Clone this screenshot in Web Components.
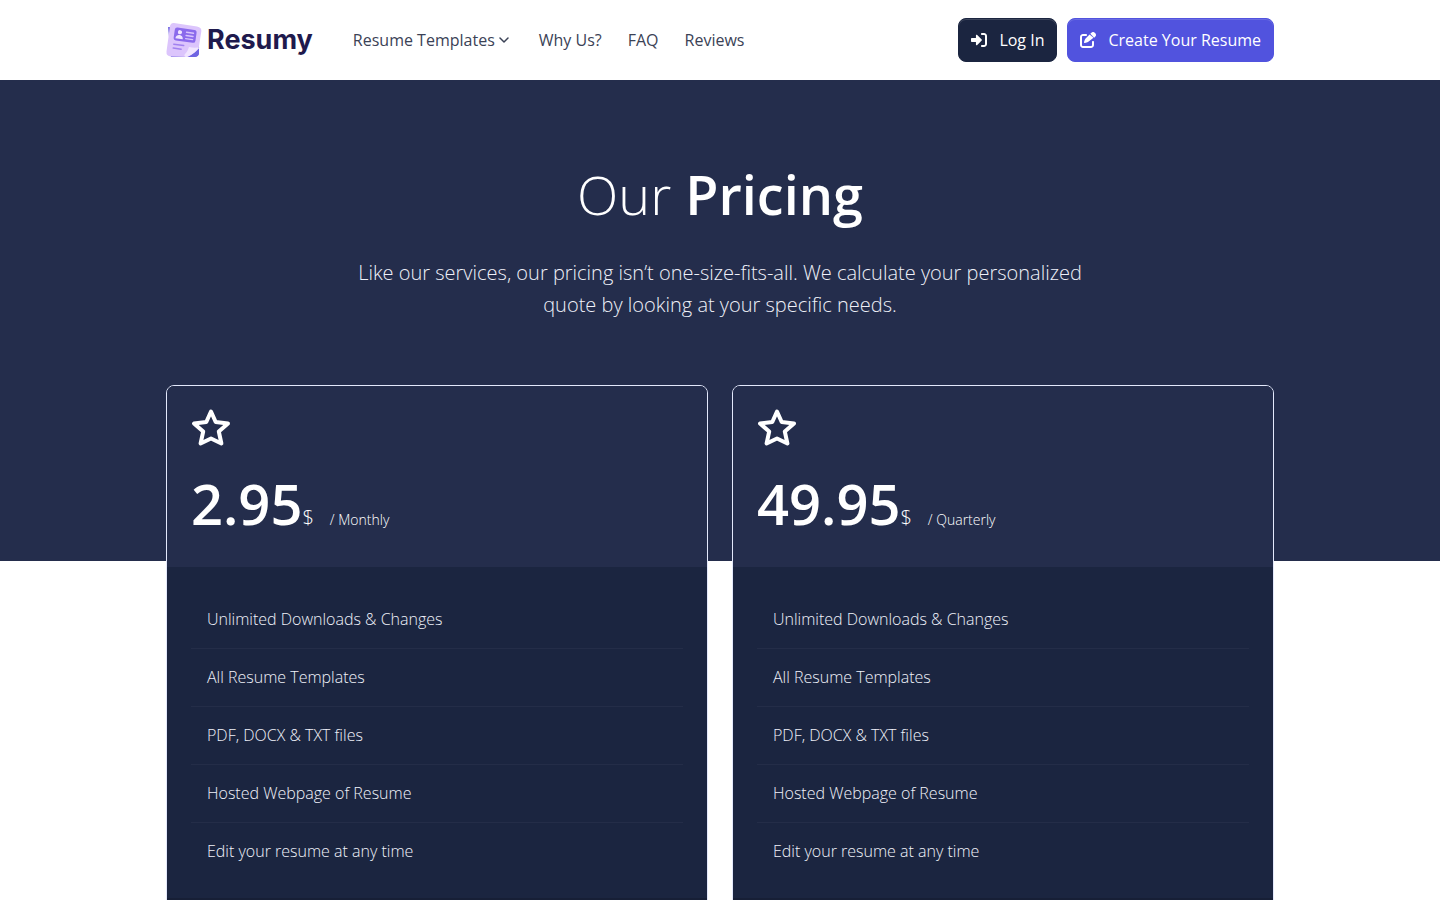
<!DOCTYPE html>
<html lang="en">
<head>
<meta charset="utf-8">
<meta name="viewport" content="width=device-width, initial-scale=1">
<title>Resumy - Pricing</title>
<style>
    body {
        margin: 0;
        background: #fff;
        color: #3b4256;
        font-family: 'Open Sans', 'Noto Sans', sans-serif;
        font-size: 16px;
        line-height: 26px;
        --navy: #242d4c;
        --dark: #1b2540;
        --primary: #5153de;
        --gutter: 16px;
        --container: 1108px;
    }
</style>
</head>
<body>

<site-nav>
    <brand-logo slot="brand"></brand-logo>
    <nav-link href="#templates" dropdown>Resume Templates</nav-link>
    <nav-link href="#why">Why Us?</nav-link>
    <nav-link href="#faq">FAQ</nav-link>
    <nav-link href="#reviews">Reviews</nav-link>
    <nav-button slot="actions" icon="login" href="#login">Log In</nav-button>
    <nav-button slot="actions" icon="edit" href="#create" primary>Create Your Resume</nav-button>
</site-nav>

<main>
    <pricing-hero>
        <span slot="light">Our</span>
        <span slot="bold">Pricing</span>
        <span slot="lead">Like our services, our pricing isn’t one-size-fits-all. We calculate your personalized quote by looking at your specific needs.</span>
    </pricing-hero>

    <pricing-grid>
        <pricing-card price="2.95" period="Monthly">
            <plan-feature>Unlimited Downloads &amp; Changes</plan-feature>
            <plan-feature>All Resume Templates</plan-feature>
            <plan-feature>PDF, DOCX &amp; TXT files</plan-feature>
            <plan-feature>Hosted Webpage of Resume</plan-feature>
            <plan-feature>Edit your resume at any time</plan-feature>
        </pricing-card>
        <pricing-card price="49.95" period="Quarterly">
            <plan-feature>Unlimited Downloads &amp; Changes</plan-feature>
            <plan-feature>All Resume Templates</plan-feature>
            <plan-feature>PDF, DOCX &amp; TXT files</plan-feature>
            <plan-feature>Hosted Webpage of Resume</plan-feature>
            <plan-feature>Edit your resume at any time</plan-feature>
        </pricing-card>
    </pricing-grid>
</main>

<script>
const icons = {
    login: '<svg viewBox="0 0 512 512" width="16" height="16" fill="currentColor" aria-hidden="true"><path d="M352 96h64c18 0 32 14 32 32v256c0 18-14 32-32 32h-64c-18 0-32 14-32 32s14 32 32 32h64c53 0 96-43 96-96V128c0-53-43-96-96-96h-64c-18 0-32 14-32 32s14 32 32 32zM343 273c9-9 9-25 0-34L199 95c-7-7-17-9-26-5s-15 12-15 22v80H32c-18 0-32 14-32 32v64c0 18 14 32 32 32h126v80c0 10 6 18 15 22s19 2 26-5z"/></svg>',
    edit: '<svg viewBox="0 0 512 512" width="16" height="16" fill="currentColor" aria-hidden="true"><path d="M472 22c-29-30-78-30-107 0l-36 35 126 126 35-36c30-29 30-78 0-107zM307 80 172 215c-8 8-14 19-18 30l-26 77c-3 9-1 18 6 25s16 9 25 6l77-26c11-4 22-10 30-18l166-127zM96 64c-53 0-96 43-96 96v256c0 53 43 96 96 96h256c53 0 96-43 96-96v-96c0-18-14-32-32-32s-32 14-32 32v96c0 18-14 32-32 32H96c-18 0-32-14-32-32V160c0-18 14-32 32-32h96c18 0 32-14 32-32s-14-32-32-32z"/></svg>',
    chevron: '<svg viewBox="0 0 10 10" width="10" height="10" fill="none" stroke="currentColor" stroke-width="1.5" stroke-linecap="round" stroke-linejoin="round" aria-hidden="true"><path d="M1 3l4 4 4-4"/></svg>',
    star: '<svg viewBox="0 0 40 40" width="40" height="40" fill="none" stroke="currentColor" stroke-width="4" stroke-linejoin="round" aria-hidden="true"><path d="M20 4.500l4.700 10.500 12.300 1.500-9.200 8 2.600 12L20 31.500l-10.400 5 2.600-12-9.200-8 12.300-1.500z"/></svg>'
}

class BrandLogo extends HTMLElement {
    constructor() {
        super()
        this.attachShadow({ mode: 'open' }).innerHTML = `
            <style>
                :host { display: block; }
                a {
                    display: flex;
                    align-items: center;
                    gap: 5px;
                    color: #1f1a4d;
                    font: 700 27px/40px 'Inter', 'Open Sans', sans-serif;
                    text-decoration: none;
                }
            </style>
            <a href="#home">
                <svg viewBox="0 0 36 36" width="36" height="36" aria-hidden="true">
                    <path d="M2 5h6l25 20v6q0 4-5 4H5z" fill="#7469e2"/>
                    <path d="M8 1l23 3.500q5 1 4.300 5L33 24c-2 5-6 8-11 11L5 34.500q-5-.500-4.500-5L4 4q1-3.500 4-3z" fill="#dcc5fc"/>
                    <path d="M21 35c4-1 9-4 12-10v6q-.500 4-5 4z" fill="#6f64e2"/>
                    <path d="M34 25c-2 3-8 8-13 10-3 0-3-2-2-3 2-2 3-4 4-7 4 1 8 1 11 0z" fill="#f1e6ff"/>
                    <g transform="rotate(8 18 14)" fill="none" stroke-linecap="round">
                        <rect x="8" y="6.500" width="22" height="13" rx="2.500" fill="#8b6aec"/>
                        <path d="M20 10h7M20 13.200h7M20 16.400h7" stroke="#d9c3fd" stroke-width="1.400"/>
                        <circle cx="13.500" cy="10.800" r="2.100" fill="#f0e5ff"/>
                        <path d="M9.800 17.500c0-5 7.400-5 7.400 0z" fill="#f0e5ff"/>
                        <path d="M9 23.500h10M9 27.500h8" stroke="#a181ef" stroke-width="1.500"/>
                    </g>
                </svg>
                <span>Resumy</span>
            </a>`
    }
}

class NavLink extends HTMLElement {
    constructor() {
        super()
        this.attachShadow({ mode: 'open' }).innerHTML = `
            <style>
                :host { display: block; }
                :host([dropdown]) { margin-right: 4px; }
                a {
                    display: flex;
                    align-items: center;
                    gap: 4px;
                    color: inherit;
                    text-decoration: none;
                }
            </style>
            <a href="${this.getAttribute('href')}"><slot></slot>${this.hasAttribute('dropdown') ? icons.chevron : ''}</a>`
    }
}

class NavButton extends HTMLElement {
    constructor() {
        super()
        this.attachShadow({ mode: 'open' }).innerHTML = `
            <style>
                :host { display: block; }
                a {
                    display: flex;
                    align-items: center;
                    gap: 12px;
                    padding: 8px 12px;
                    border: 1px solid var(--dark);
                    border-radius: 8px;
                    background: var(--dark);
                    box-shadow: inset 0 1px 0 rgba(255, 255, 255, .15);
                    color: #fff;
                    font-weight: 500;
                    text-decoration: none;
                }
                :host([primary]) a {
                    border-color: var(--primary);
                    background: var(--primary);
                }
            </style>
            <a href="${this.getAttribute('href')}">${icons[this.getAttribute('icon')]}<slot></slot></a>`
    }
}

class SiteNav extends HTMLElement {
    constructor() {
        super()
        this.attachShadow({ mode: 'open' }).innerHTML = `
            <style>
                :host { display: block; background: #fff; }
                header {
                    display: flex;
                    align-items: center;
                    max-width: var(--container);
                    min-height: 80px;
                    margin: 0 auto;
                    padding: 0 var(--gutter);
                }
                nav {
                    display: flex;
                    flex: 1;
                    gap: 26px;
                    margin-left: 40px;
                }
                .actions { display: flex; gap: 10px; }
            </style>
            <header>
                <slot name="brand"></slot>
                <nav><slot></slot></nav>
                <div class="actions"><slot name="actions"></slot></div>
            </header>`
    }
}

class PricingHero extends HTMLElement {
    constructor() {
        super()
        this.attachShadow({ mode: 'open' }).innerHTML = `
            <style>
                :host {
                    display: block;
                    padding: 80px var(--gutter) 240px;
                    background: var(--navy);
                    color: #fff;
                    text-align: center;
                }
                h1 {
                    margin: 0 0 29px;
                    font-size: 54px;
                    font-weight: 300;
                    line-height: 68px;
                }
                strong { font-weight: 600; }
                p {
                    max-width: 740px;
                    margin: 0 auto;
                    color: #eef0f8;
                    font-size: 20px;
                    font-weight: 300;
                    line-height: 32px;
                }
            </style>
            <h1><slot name="light"></slot> <strong><slot name="bold"></slot></strong></h1>
            <p><slot name="lead"></slot></p>`
    }
}

class PricingGrid extends HTMLElement {
    constructor() {
        super()
        this.attachShadow({ mode: 'open' }).innerHTML = `
            <style>
                :host {
                    display: grid;
                    grid-template-columns: repeat(auto-fit, minmax(300px, 1fr));
                    gap: 24px;
                    max-width: var(--container);
                    margin: -176px auto 0;
                    padding: 0 var(--gutter) 80px;
                }
            </style>
            <slot></slot>`
    }
}

class PricingCard extends HTMLElement {
    constructor() {
        super()
        this.attachShadow({ mode: 'open' }).innerHTML = `
            <style>
                :host {
                    display: block;
                    overflow: hidden;
                    border: 1px solid #e3e8fb;
                    border-radius: 8px;
                    background: var(--dark);
                    color: #fff;
                }
                .head {
                    padding: 21px 24px 30px;
                    background: var(--navy);
                }
                svg { display: block; }
                .price {
                    display: flex;
                    align-items: baseline;
                    margin-top: 22px;
                    font-weight: 300;
                }
                .amount {
                    font-size: 56px;
                    font-weight: 600;
                    line-height: 68px;
                }
                .currency { font-size: 20px; }
                .period { margin-left: 16px; font-size: 14px; }
                .features { padding: 24px 24px 18px; }
                footer {
                    min-height: 80px;
                    background: #171f36;
                }
            </style>
            <div class="head">
                ${icons.star}
                <div class="price">
                    <span class="amount">${this.getAttribute('price')}</span>
                    <span class="currency">$</span>
                    <span class="period">/ ${this.getAttribute('period')}</span>
                </div>
            </div>
            <div class="features" role="list"><slot></slot></div>
            <footer></footer>`
    }
}

class PlanFeature extends HTMLElement {
    constructor() {
        super()
        this.setAttribute('role', 'listitem')
        this.attachShadow({ mode: 'open' }).innerHTML = `
            <style>
                :host {
                    display: block;
                    padding: 16px;
                    border-bottom: 1px solid #242d48;
                    color: #f0f2fa;
                    font-weight: 300;
                    line-height: 25px;
                }
                :host(:last-child) { border-bottom: 0; }
            </style>
            <slot></slot>`
    }
}

customElements.define('brand-logo', BrandLogo)
customElements.define('nav-link', NavLink)
customElements.define('nav-button', NavButton)
customElements.define('site-nav', SiteNav)
customElements.define('pricing-hero', PricingHero)
customElements.define('pricing-grid', PricingGrid)
customElements.define('pricing-card', PricingCard)
customElements.define('plan-feature', PlanFeature)
</script>
</body>
</html>
